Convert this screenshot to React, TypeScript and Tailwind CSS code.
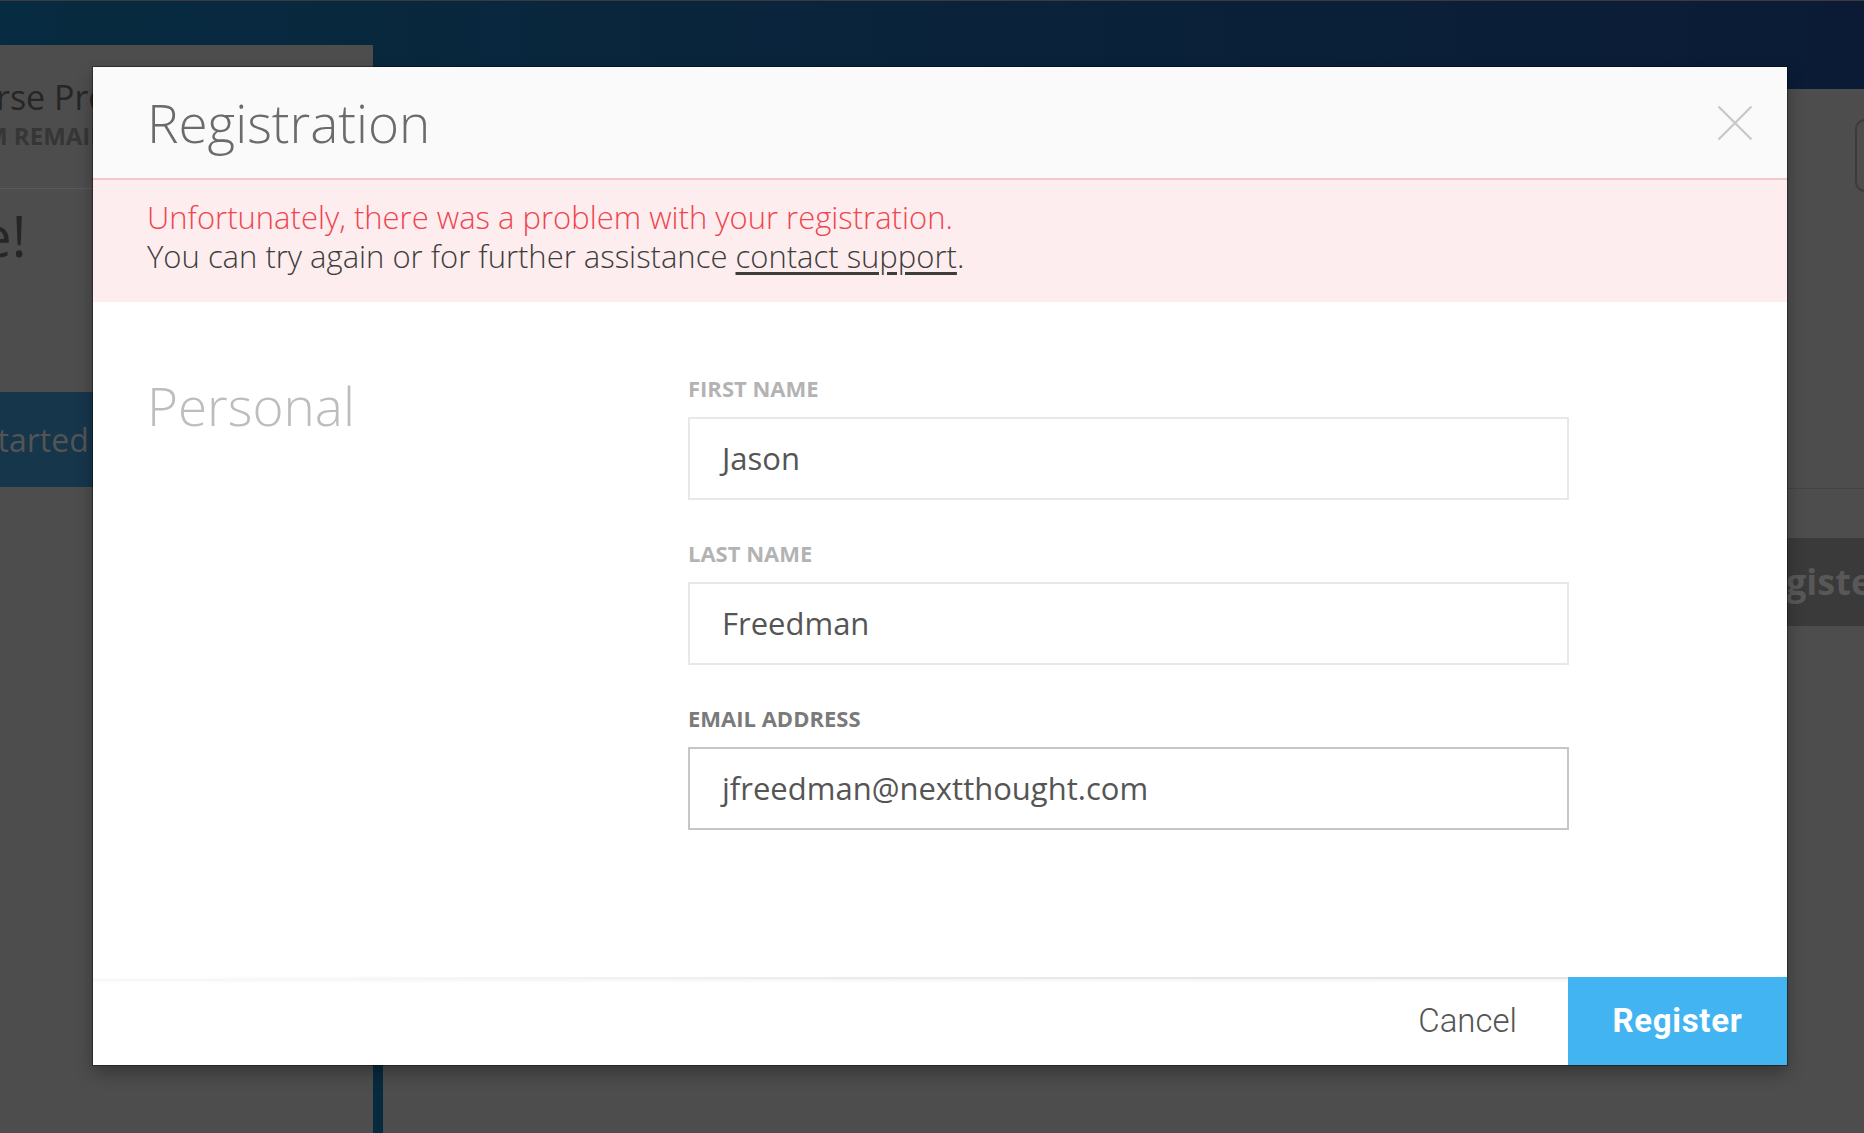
import React from "react"

type Field = {
  label: string
  value: string
  focused?: boolean
}

const fields: Field[] = [
  { label: "FIRST NAME", value: "Jason" },
  { label: "LAST NAME", value: "Freedman" },
  { label: "EMAIL ADDRESS", value: "jfreedman@nextthought.com", focused: true },
]

function CloseIcon() {
  return (
    <svg width="36" height="36" viewBox="0 0 36 36" fill="none">
      <path d="M1.5 1.5L34.5 34.5M34.5 1.5L1.5 34.5" stroke="#c8c8c8" strokeWidth="2.2" />
    </svg>
  )
}

// dimmed page sitting behind the overlay
function BackgroundPage() {
  return (
    <div className="flex h-full flex-col">
      <div className="h-[89px] shrink-0 border-t border-[#3b3b3b] bg-gradient-to-r from-[#072b40] to-[#0b1b36]" />
      <div className="flex flex-1">
        <div className="relative z-0 -mt-[44px] w-[373px] shrink-0 bg-[#4d4d4d]">
          <div className="border-b border-[#5a5a5a] pb-[39px] pt-[32px]">
            <div className="-ml-[4px] whitespace-nowrap text-[34px] leading-[40px] text-[#262626]">
              rse Progress
            </div>
            <div className="-ml-[15px] mt-[6px] whitespace-nowrap text-[24px] font-bold leading-[26px] text-[#363636]">
              M REMAINING
            </div>
          </div>
          <div className="pt-[14px]">
            <div className="-ml-[54px] whitespace-nowrap text-[56px] leading-[64px] text-[#262626]">
              ne!
            </div>
          </div>
          <div className="mt-[125px] flex h-[95px] items-center bg-[#16364b]">
            <span className="-ml-[20px] whitespace-nowrap text-[32px] text-[#545454]">
              Started
            </span>
          </div>
        </div>
        <div className="flex flex-1 flex-col items-end border-l-[10px] border-[#072a3e] bg-[#4d4d4d]">
          <div className="-mr-[40px] mt-[30px] h-[73px] w-[49px] rounded-[10px] border-2 border-[#3b3b3b]" />
          <div className="h-[297px] w-full border-b border-[#444444]" />
          <div className="mt-[49px] flex h-[88px] w-[520px] items-center overflow-hidden bg-[#3a3a3a] pl-[397px]">
            <span className="whitespace-nowrap text-[36px] font-bold text-[#585858]">Register</span>
          </div>
        </div>
      </div>
    </div>
  )
}

function FormField({ field }: { field: Field }) {
  return (
    <div className="mb-[38px]">
      <div
        className={
          field.focused
            ? "text-[22px] font-bold leading-[30px] text-[#7a7a7a]"
            : "text-[22px] font-bold leading-[30px] text-[#b3b3b3]"
        }
      >
        {field.label}
      </div>
      <div
        className={
          field.focused
            ? "mt-[14px] flex h-[83px] items-center border-2 border-[#c6c6c6] bg-white px-8"
            : "mt-[14px] flex h-[83px] items-center border-2 border-[#e8e8e8] bg-white px-8"
        }
      >
        <span className="text-[31px] text-[#555555]">{field.value}</span>
      </div>
    </div>
  )
}

export default function App() {
  return (
    <div className="relative h-[1133px] w-full overflow-hidden bg-[#4d4d4d] font-['Open_Sans','Liberation_Sans',sans-serif]">
      <BackgroundPage />

      {/* Registration modal */}
      <div className="absolute left-[93px] top-[67px] flex h-[998px] w-[1694px] flex-col bg-white shadow-[0_0_0_1px_rgba(0,0,0,0.35),0_8px_16px_rgba(0,0,0,0.3)]">
        <div className="flex h-[111px] shrink-0 items-center justify-between bg-[#fafafa] pl-[54px] pr-[34px]">
          <h1 className="text-[53px] font-light text-[#6b6b6b]">Registration</h1>
          <button className="mt-[1px]">
            <CloseIcon />
          </button>
        </div>

        <div className="h-[124px] shrink-0 border-t-2 border-[#f4c8cb] bg-[#fdedee] px-[54px] pt-[18px] text-[31px] font-light leading-[39px]">
          <p className="text-[#f0454f]">Unfortunately, there was a problem with your registration.</p>
          <p className="text-[#3d3d3d]">
            You can try again or for further assistance{" "}
            <a className="underline underline-offset-[4px]">contact support</a>.
          </p>
        </div>

        <div className="flex flex-1 px-[54px] pt-[71px]">
          <div className="w-[541px] shrink-0 pt-[3px]">
            <h2 className="text-[53px] font-light leading-[60px] text-[#bdbdbd]">Personal</h2>
          </div>
          <div className="w-[881px]">
            {fields.map((f) => (
              <FormField key={f.label} field={f} />
            ))}
          </div>
        </div>

        <div className="flex h-[88px] shrink-0">
          <div className="flex flex-1 flex-col">
            <div className="h-[2px] bg-gradient-to-r from-white via-[#ececec] to-[#e4e4e4]" />
            <div className="h-[4px] bg-gradient-to-b from-[#f4f4f4] to-white" />
            <div className="flex flex-1 items-center justify-end pb-[6px] pr-[51px]">
              <button className="font-['Roboto',sans-serif] text-[33px] font-light text-[#555555]">
                Cancel
              </button>
            </div>
          </div>
          <button className="flex w-[219px] items-center justify-center bg-[#41b4f1] font-['Roboto',sans-serif] text-[33px] font-bold tracking-[0.02em] text-white">
            Register
          </button>
        </div>
      </div>
    </div>
  )
}
